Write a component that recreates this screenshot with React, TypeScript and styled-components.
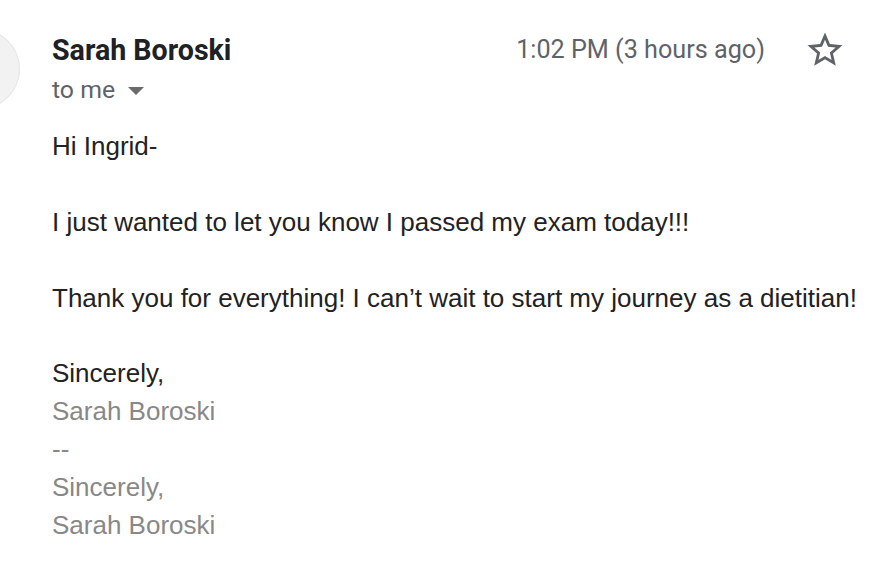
import styled, { createGlobalStyle } from "styled-components";

const GlobalStyle = createGlobalStyle`
  html, body {
    margin: 0;
    padding: 0;
    background: #ffffff;
  }
  body {
    font-family: "Liberation Sans", Arial, sans-serif;
    -webkit-font-smoothing: antialiased;
  }
`;

const StyledMessage = styled.div`
  width: 874px;
  height: 574px;
  overflow: hidden;
  padding-top: 29px;
  box-sizing: border-box;
`;

const StyledHeader = styled.div`
  display: flex;
  flex-direction: row;
  align-items: flex-start;
  padding-right: 28px;
`;

const StyledAvatar = styled.div`
  flex: none;
  width: 80px;
  height: 80px;
  margin-left: -60px;
  border-radius: 50%;
  background: #f2f2f2;
  box-shadow: inset 0 0 0 1px #e7e7e7;
`;

const StyledSender = styled.div`
  flex: 1;
  display: flex;
  flex-direction: column;
  margin-left: 32px;
  padding-top: 3px;
`;

const StyledName = styled.p`
  margin: 0;
  font-family: Roboto, "Liberation Sans", sans-serif;
  font-size: 28.6px;
  line-height: 36px;
  font-weight: 700;
  color: #202124;
`;

const StyledRecipients = styled.div`
  display: flex;
  flex-direction: row;
  align-items: center;
  gap: 13px;
  margin-top: 6px;
  font-family: Roboto, "Liberation Sans", sans-serif;
  font-size: 24.8px;
  line-height: 32px;
  color: #5f6368;
`;

const StyledCaret = styled.span`
  width: 0;
  height: 0;
  margin-top: 2px;
  border-left: 8px solid transparent;
  border-right: 8px solid transparent;
  border-top: 8px solid #6b6b6b;
`;

const StyledTime = styled.p`
  margin: 0;
  padding-top: 5px;
  font-family: Roboto, "Liberation Sans", sans-serif;
  font-size: 25.2px;
  line-height: 32px;
  color: #5f6368;
  white-space: nowrap;
`;

const StyledStarButton = styled.div`
  display: flex;
  align-items: center;
  justify-content: center;
  width: 42px;
  height: 42px;
  margin-left: 39px;
`;

const StyledBody = styled.div`
  padding: 0 0 0 52px;
  margin-top: 19px;
  font-family: "Liberation Sans", Arial, sans-serif;
  font-size: 26px;
  line-height: 37.9px;
  color: #222222;
  white-space: nowrap;
`;

const StyledParagraph = styled.p`
  margin: 0 0 37.9px 0;
`;

const StyledSignature = styled.div`
  color: #888888;
`;

function StarIcon({ color }: { color: string }) {
  return (
    <svg width="42" height="42" viewBox="0 0 24 24" fill={color}>
      <path d="M22 9.24l-7.19-.62L12 2 9.19 8.63 2 9.24l5.46 4.73L5.82 21 12 17.27 18.18 21l-1.63-7.03L22 9.24zM12 15.4l-3.76 2.27 1-4.28-3.32-2.88 4.38-.38L12 6.1l1.71 4.04 4.38.38-3.32 2.88 1 4.28L12 15.4z" />
    </svg>
  );
}

export default function App() {
  return (
    <>
      <GlobalStyle />
      <StyledMessage>
        <StyledHeader>
          <StyledAvatar />
          <StyledSender>
            <StyledName>Sarah Boroski</StyledName>
            <StyledRecipients>
              to me
              <StyledCaret />
            </StyledRecipients>
          </StyledSender>
          <StyledTime>1:02 PM (3 hours ago)</StyledTime>
          <StyledStarButton>
            <StarIcon color="#5f6368" />
          </StyledStarButton>
        </StyledHeader>
        <StyledBody>
          <StyledParagraph>Hi Ingrid-</StyledParagraph>
          <StyledParagraph>
            I just wanted to let you know I passed my exam today!!!
          </StyledParagraph>
          <StyledParagraph>
            Thank you for everything! I can’t wait to start my journey as a
            dietitian!
          </StyledParagraph>
          <div>Sincerely,</div>
          <StyledSignature>
            <div>Sarah Boroski</div>
            <div>--</div>
            <div>Sincerely,</div>
            <div>Sarah Boroski</div>
          </StyledSignature>
        </StyledBody>
      </StyledMessage>
    </>
  );
}
